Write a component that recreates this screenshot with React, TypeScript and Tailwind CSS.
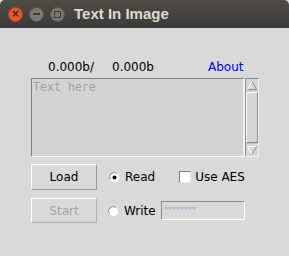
import React from "react";

const sans = { fontFamily: '"DejaVu Sans", sans-serif' };

function Radio({ checked }: { checked?: boolean }) {
  return (
    <svg width="11" height="11" viewBox="0 0 11 11" className="shrink-0">
      <circle cx="5.5" cy="5.5" r="4.5" fill="#ffffff" />
      <path d="M1.3 7.5 A4.5 4.5 0 0 1 7.5 1.3" stroke="#8a8a8a" strokeWidth="1" fill="none" />
      <path d="M9.7 3.5 A4.5 4.5 0 0 1 3.5 9.7" stroke="#e8e8e8" strokeWidth="1" fill="none" />
      {checked && <circle cx="5.5" cy="5.5" r="2" fill="#000" />}
    </svg>
  );
}

export default function App() {
  return (
    <div className="w-[289px] h-[256px] bg-[#d9d9d9] flex flex-col overflow-hidden" style={sans}>
      {/* Title bar */}
      <div className="h-[28px] flex items-center pl-[8px] bg-gradient-to-b from-[#4d4c47] to-[#3b3a36] rounded-t-[5px]">
        <div className="w-[15px] h-[15px] rounded-full bg-[#e5592c] border border-[#b8401c] flex items-center justify-center text-[#3a1a0e] text-[10px] font-bold leading-none">
          ×
        </div>
        <div className="ml-[6px] w-[15px] h-[15px] rounded-full bg-[#7a7974] border border-[#55544f] flex items-center justify-center">
          <div className="w-[7px] h-[2px] bg-[#3c3b37]" />
        </div>
        <div className="ml-[6px] w-[15px] h-[15px] rounded-full bg-[#7a7974] border border-[#55544f] flex items-center justify-center">
          <div className="w-[7px] h-[7px] border-[1.5px] border-[#3c3b37]" />
        </div>
        <div
          className="ml-[9px] text-[#dfdbd2] text-[15px] font-bold"
          style={{ fontFamily: '"Liberation Sans", sans-serif' }}
        >
          Text In Image
        </div>
      </div>

      {/* Body */}
      <div className="flex-1 pl-[31px] pt-[31px] text-[12px] text-black">
        <div className="h-[16px] leading-[16px] flex">
          <span className="ml-[17px] w-[64px]">0.000b/</span>
          <span className="w-[96px]">0.000b</span>
          <span className="text-[#0000ff]">About</span>
        </div>

        <div className="mt-[3px] flex h-[79px]">
          <div className="w-[214px] h-full bg-[#d3d3d3] border-t border-l border-[#7f7f7f] border-r-[2px] border-r-[#f4f4f4] border-b border-b-[#f4f4f4] pl-[1px]">
            <div
              className="text-[#a3a3a3] text-[11.6px] leading-[16px]"
              style={{ fontFamily: '"DejaVu Sans Mono", monospace' }}
            >
              Text here
            </div>
          </div>
          <div className="w-[14px] h-full bg-[#c4c4c4] border border-t-[#8a8a8a] border-l-[#8a8a8a] border-r-[#f0f0f0] border-b-[#f0f0f0] flex flex-col">
            <div className="h-[12px] flex items-center justify-center bg-[#d6d6d6]">
              <svg width="10" height="9" viewBox="0 0 10 9">
                <polygon points="5,0.5 9.5,8.5 0.5,8.5" fill="#d9d9d9" />
                <polyline points="0.5,8.5 5,0.5" stroke="#ffffff" fill="none" />
                <polyline points="5,0.5 9.5,8.5 0.5,8.5" stroke="#8a8a8a" fill="none" />
              </svg>
            </div>
            <div className="flex-1 mt-[1px] mb-[1px] bg-[#d6d6d6] border border-t-white border-l-white border-r-[#8a8a8a] border-b-[#8a8a8a]" />
            <div className="h-[12px] flex items-center justify-center bg-[#d6d6d6]">
              <svg width="10" height="9" viewBox="0 0 10 9">
                <polygon points="0.5,0.5 9.5,0.5 5,8.5" fill="#d9d9d9" />
                <polyline points="9.5,0.5 0.5,0.5 5,8.5" stroke="#ffffff" fill="none" />
                <polyline points="5,8.5 9.5,0.5" stroke="#8a8a8a" fill="none" />
              </svg>
            </div>
          </div>
        </div>

        <div className="mt-[7px] h-[26px] flex items-center">
          <div className="w-[66px] h-[26px] flex items-center justify-center border border-t-white border-l-white border-r-[#9a9a9a] border-b-[#9a9a9a] bg-[#d9d9d9]">
            Load
          </div>
          <div className="ml-[12px]">
            <Radio checked />
          </div>
          <span className="ml-[5px]">Read</span>
          <div className="ml-[24px] w-[12px] h-[12px] bg-white border border-t-[#7a7a7a] border-l-[#7a7a7a] border-r-[#e8e8e8] border-b-[#e8e8e8]" />
          <span className="ml-[4px]">Use AES</span>
        </div>

        <div className="mt-[8px] h-[25px] flex items-center">
          <div className="w-[66px] h-[25px] flex items-center justify-center border border-t-white border-l-white border-r-[#b0b0b0] border-b-[#b0b0b0] text-[#a3a3a3]">
            Start
          </div>
          <div className="ml-[11px] mt-[1px]">
            <Radio />
          </div>
          <span className="ml-[5px]">Write</span>
          <div className="ml-[5px] w-[84px] h-[19px] border border-t-[#8a8a8a] border-l-[#8a8a8a] border-r-white border-b-white bg-[#d9d9d9] flex items-center pl-[2px]">
            <span className="text-[#9fb0c8] text-[9px] leading-none tracking-[-0.5px]">********</span>
          </div>
        </div>
      </div>
    </div>
  );
}
